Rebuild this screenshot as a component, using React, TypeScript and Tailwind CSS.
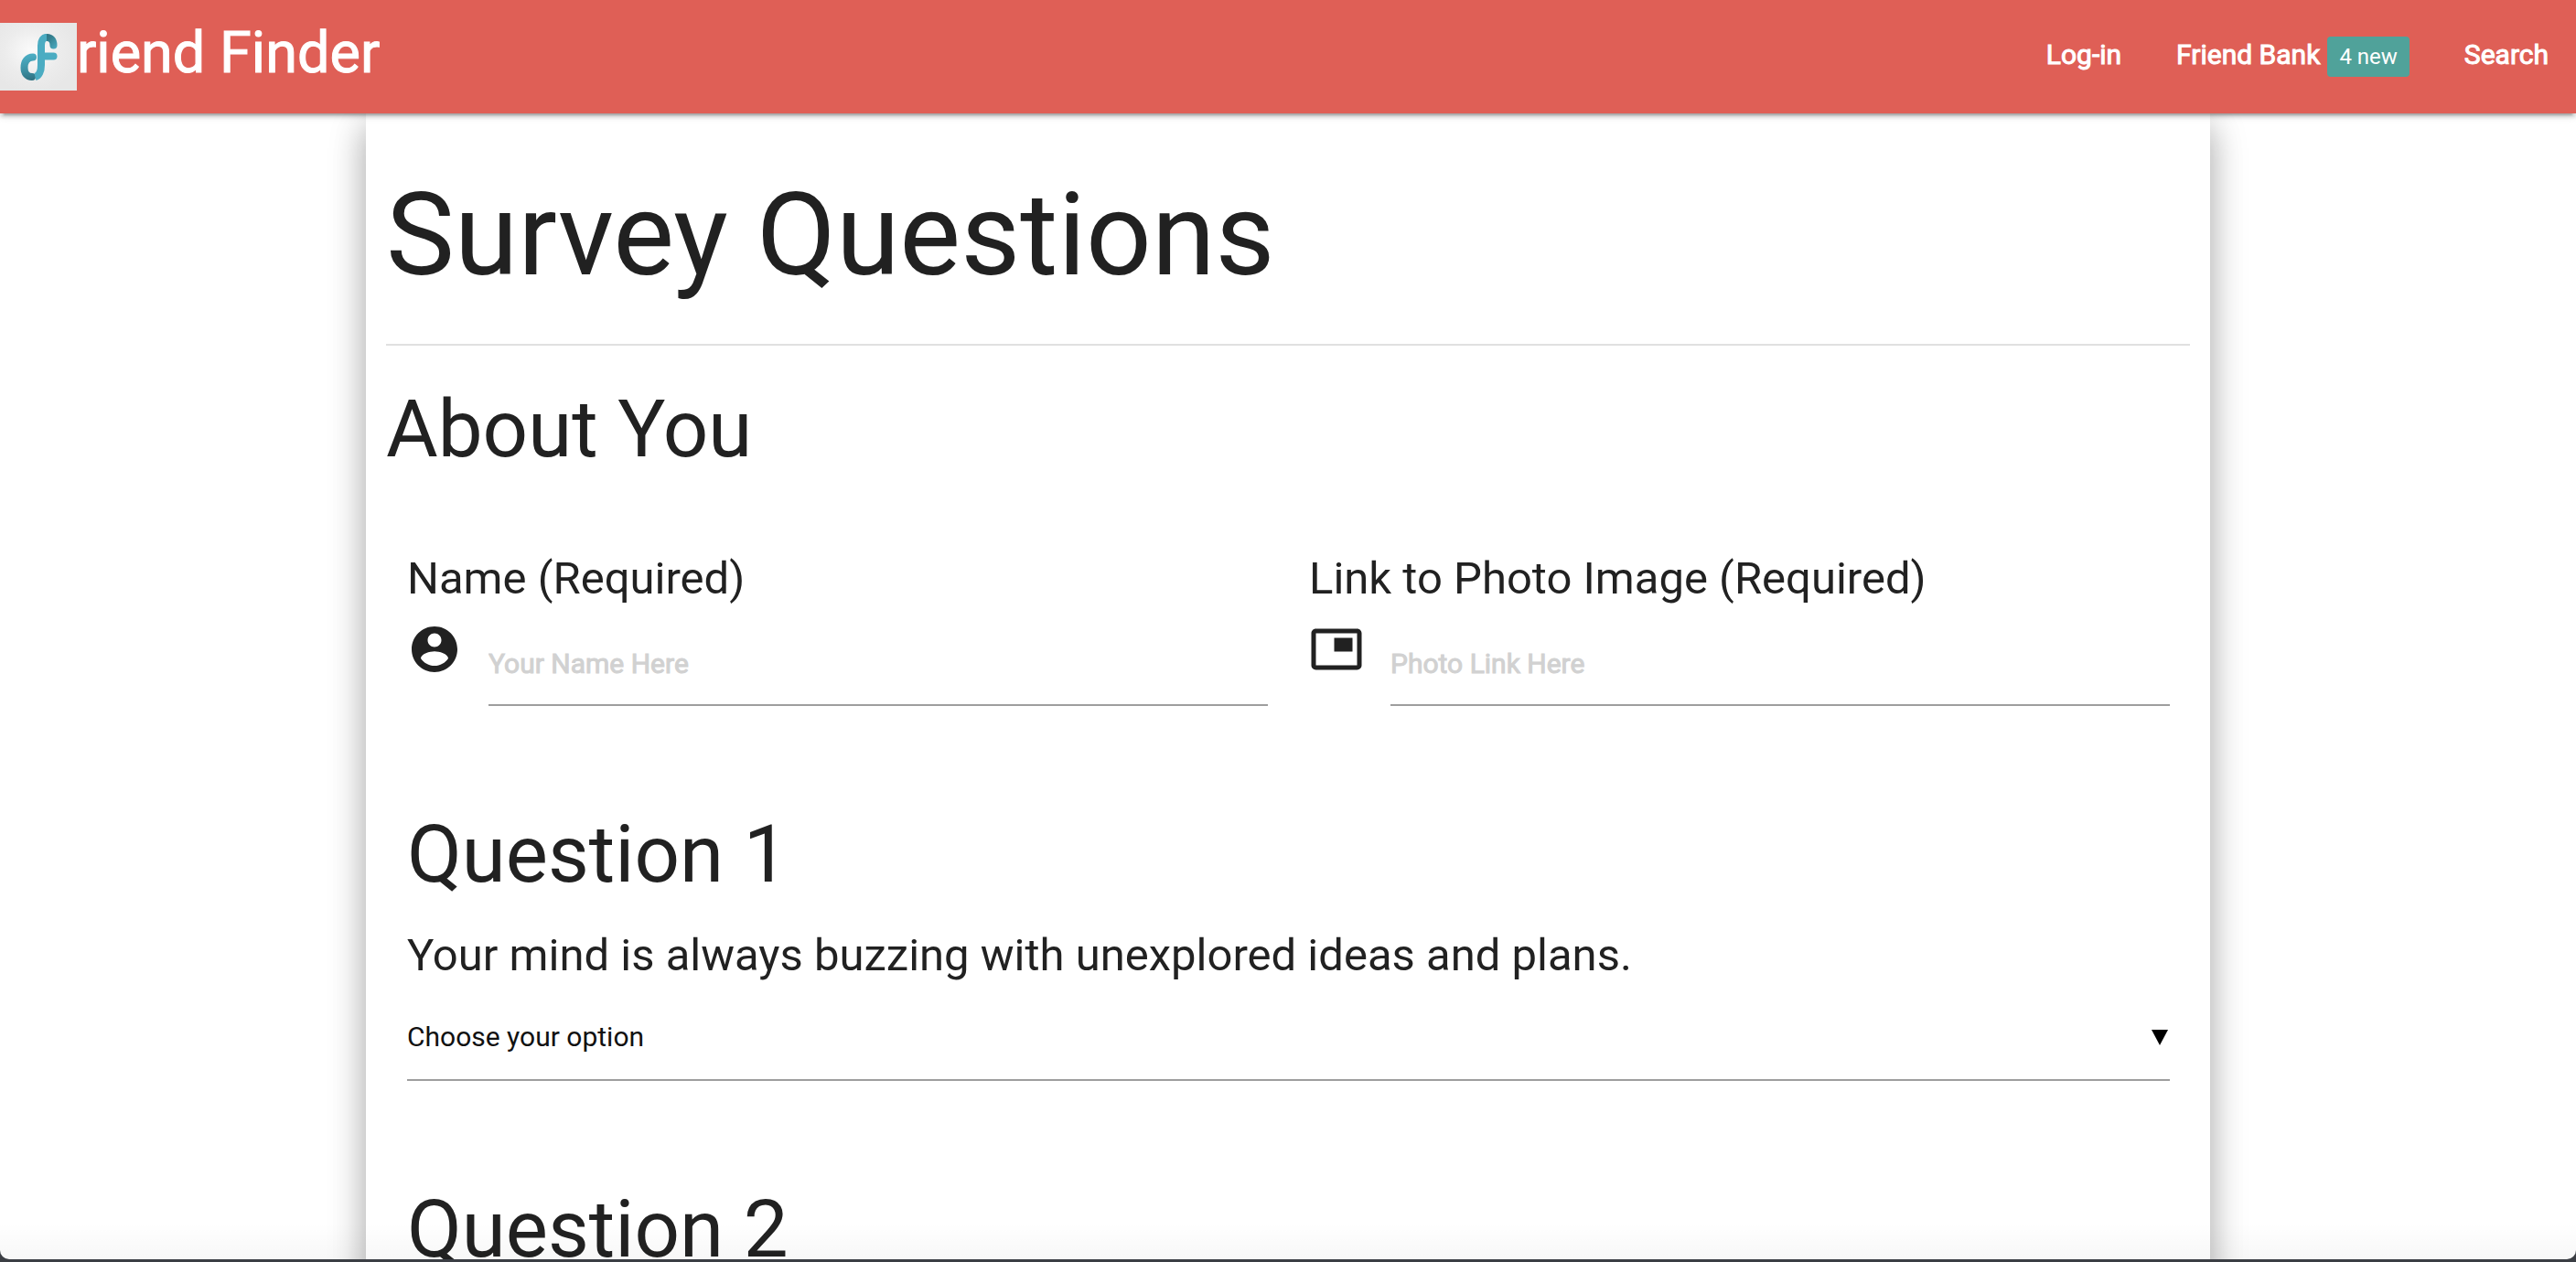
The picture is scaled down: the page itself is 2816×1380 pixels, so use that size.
import type { ReactNode } from "react";

function FinderLogo() {
  return (
    <svg viewBox="0 0 84 74" className="h-[74px] w-[84px] shrink-0" role="img" aria-label="F">
      <defs>
        <radialGradient id="plate" cx="42%" cy="42%" r="60%">
          <stop offset="0" stopColor="#fbfbfb" />
          <stop offset="0.6" stopColor="#ececec" />
          <stop offset="1" stopColor="#e7e7e7" />
        </radialGradient>
        <linearGradient id="hook" gradientUnits="userSpaceOnUse" x1="48" y1="14" x2="62" y2="28">
          <stop offset="0" stopColor="#2f7383" />
          <stop offset="0.35" stopColor="#35808f" />
          <stop offset="1" stopColor="#4bacc2" />
        </linearGradient>
        <linearGradient id="bowl" gradientUnits="userSpaceOnUse" x1="32" y1="36" x2="36" y2="63">
          <stop offset="0" stopColor="#4bacc2" />
          <stop offset="0.5" stopColor="#3e93a6" />
          <stop offset="1" stopColor="#2f7080" />
        </linearGradient>
      </defs>
      <rect width="84" height="74" fill="url(#plate)" />
      <g fill="none" strokeWidth="8" strokeLinecap="round">
        <path d="M58.5 24.5C58.5 19 55.5 16 51.5 16" stroke="url(#hook)" />
        <path d="M36 37.5C30 37.5 26.5 42.5 26.5 49C26.5 55 29.5 59 35 59" stroke="url(#bowl)" />
        <path d="M47 36.5H58.5" stroke="#4bacc2" />
        <path
          d="M51 16C47 16 45 19.5 45 25V46C45 53 42.5 58 38.5 59"
          stroke="#4bacc2"
          strokeLinecap="butt"
        />
      </g>
    </svg>
  );
}

function AccountIcon() {
  return (
    <svg viewBox="0 0 24 24" fill="currentColor" className="size-15 shrink-0" aria-hidden="true">
      <path d="M12 2C6.48 2 2 6.48 2 12s4.48 10 10 10 10-4.48 10-10S17.52 2 12 2zm0 3c1.66 0 3 1.34 3 3s-1.34 3-3 3-3-1.34-3-3 1.34-3 3-3zm0 14.2c-2.5 0-4.71-1.28-6-3.22.03-1.99 4-3.08 6-3.08 1.99 0 5.97 1.09 6 3.08-1.29 1.94-3.5 3.22-6 3.22z" />
    </svg>
  );
}

function PictureIcon() {
  return (
    <svg viewBox="0 0 24 24" fill="currentColor" className="size-15 shrink-0" aria-hidden="true">
      <path d="M19 7h-8v6h8V7zm2-4H3c-1.1 0-2 .9-2 2v14c0 1.1.9 1.98 2 1.98h18c1.1 0 2-.88 2-1.98V5c0-1.1-.9-2-2-2zm0 16.01H3V4.98h18v14.03z" />
    </svg>
  );
}

function TextField(props: { id: string; label: string; placeholder: string; icon: ReactNode }) {
  return (
    <div className="flex min-w-0 flex-col gap-5">
      <label htmlFor={props.id} className="text-[49px] leading-[54px]">
        {props.label}
      </label>
      <div className="flex gap-[29px]">
        {props.icon}
        <input
          id={props.id}
          type="text"
          placeholder={props.placeholder}
          className="h-23 min-w-0 flex-1 border-b-2 border-[#9e9e9e] bg-transparent text-[30px] outline-none placeholder:text-[#d1d1d1] placeholder:[-webkit-text-stroke:1px_#d1d1d1]"
        />
      </div>
    </div>
  );
}

const options = ["1 (Strongly Disagree)", "2", "3", "4", "5 (Strongly Agree)"];

function Question(props: { number: number; text?: string }) {
  const id = `question-${props.number}`;
  return (
    <section className="mt-[114px] pr-[22px] pl-[23px]">
      <h3 id={`${id}-title`} className="text-[87px] leading-[96px]">
        Question {props.number}
      </h3>
      {props.text && (
        <label htmlFor={id} className="mt-9 block text-[49px] leading-[54px]">
          {props.text}
        </label>
      )}
      <div className="relative mt-[18px]">
        <select
          id={id}
          aria-labelledby={`${id}-title`}
          defaultValue=""
          className="h-23 w-full appearance-none border-b-2 border-[#9e9e9e] bg-transparent pb-1 text-[30px] text-[#111111] outline-none"
        >
          <option value="" disabled>
            Choose your option
          </option>
          {options.map((option) => (
            <option key={option}>{option}</option>
          ))}
        </select>
        <svg
          viewBox="0 0 18 17"
          className="pointer-events-none absolute top-9 right-[2px] h-[17px] w-[18px]"
          aria-hidden="true"
        >
          <path d="M0 0H18L9 17Z" fill="#000000" />
        </svg>
      </div>
    </section>
  );
}

export default function App() {
  return (
    <div className="h-screen bg-[#3b3e44] pb-[3px] font-[Roboto,sans-serif] text-[#212121]">
      <div className="flex h-full flex-col overflow-hidden rounded-b-[10px] bg-white">
        <header className="relative z-10 flex h-31 shrink-0 items-center justify-between bg-[#df5f56] text-white shadow-[0_4px_4px_0_rgba(0,0,0,0.14),0_2px_10px_0_rgba(0,0,0,0.12),0_6px_2px_-4px_rgba(0,0,0,0.2)]">
          <a href="#home" className="flex items-center">
            <FinderLogo />
            <span className="pb-2 text-[63px] [-webkit-text-stroke:1px_white]">riend Finder</span>
          </a>
          <nav className="pb-1">
            <ul className="flex items-baseline text-[30px] [-webkit-text-stroke:1px_white]">
              <li>
                <a href="#login" className="px-[30px]">
                  Log-in
                </a>
              </li>
              <li>
                <a href="#bank" className="flex items-baseline gap-2 px-[30px]">
                  Friend Bank
                  <span className="rounded-[4px] bg-[#50a29a] px-[13px] text-[24px] leading-[44px] [-webkit-text-stroke:0]">
                    4 new
                  </span>
                </a>
              </li>
              <li>
                <a href="#search" className="px-[30px]">
                  Search
                </a>
              </li>
            </ul>
          </nav>
        </header>

        <main className="min-h-0 flex-1 overflow-y-auto [scrollbar-width:none]">
          <form className="mx-auto w-full max-w-[2016px] bg-white px-[22px] pt-16 pb-24 shadow-[0_16px_34px_0_rgba(0,0,0,0.2),0_12px_40px_0_rgba(0,0,0,0.19)]">
            <h1 className="text-[126px] leading-[139px]">Survey Questions</h1>
            <hr className="mt-[49px] border-t-2 border-[#e0e0e0]" />
            <h3 className="mt-[43px] text-[87px] leading-[96px]">About You</h3>
            <div className="mt-[89px] grid grid-cols-2 gap-x-[45px] pr-[22px] pl-[23px]">
              <TextField
                id="name"
                label="Name (Required)"
                placeholder="Your Name Here"
                icon={<AccountIcon />}
              />
              <TextField
                id="photo"
                label="Link to Photo Image (Required)"
                placeholder="Photo Link Here"
                icon={<PictureIcon />}
              />
            </div>
            <Question number={1} text="Your mind is always buzzing with unexplored ideas and plans." />
            <Question number={2} />
          </form>
        </main>
        <div className="pointer-events-none relative -mt-10 h-10 shrink-0 bg-linear-to-b from-transparent to-black/3" />
      </div>
    </div>
  );
}
